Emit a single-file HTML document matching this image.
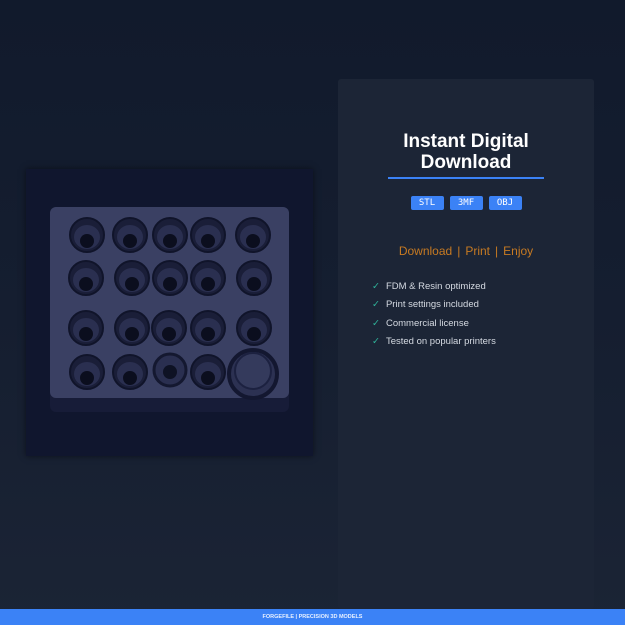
<!DOCTYPE html>
<html><head><style>
*{margin:0;padding:0;box-sizing:border-box}
body{width:625px;height:625px;overflow:hidden;background:linear-gradient(#111a2c 0%,#151e30 50%,#1b2435 100%);font-family:"Liberation Sans",sans-serif;position:relative}
.panel{position:absolute;left:338px;top:79px;width:256px;height:530px;background:#1c2536;border-radius:3px}
.img{position:absolute;left:26px;top:169px;width:287px;height:287px;background:#10162e;box-shadow:0 0 6px rgba(0,0,0,.5)}
h1{position:absolute;left:338px;width:256px;top:131px;text-align:center;color:#fff;font-size:19px;line-height:21px;font-weight:bold}
.rule{position:absolute;left:388px;top:177px;width:156px;height:2px;background:#3b82f6}
.tags{position:absolute;left:338px;width:256px;top:196px;text-align:center;font-size:0}
.tags span{display:inline-block;background:#3b82f6;color:#fff;font-family:"DejaVu Sans Mono",monospace;font-size:9px;line-height:14px;width:33px;margin:0 3px;border-radius:2px}
.dl{position:absolute;left:338px;width:256px;top:244px;text-align:center;color:#c77a22;font-size:12px}
.dl i{font-style:normal;color:#c77a22;margin:0 5px}
ul{position:absolute;left:372px;top:281px;list-style:none;color:#d5dae2;font-size:9.5px}
li{height:18.3px}
li b{color:#2fb39a;font-weight:normal;margin-right:6px}
.foot{position:absolute;left:0;top:609px;width:625px;height:16px;background:#3b82f6;color:#e8f0ff;font-size:5.5px;font-weight:bold;text-align:center;line-height:16px}
</style></head><body>
<div class="panel"></div>
<div class="img">
<svg width="287" height="287" viewBox="26 169 287 287">
<defs>
<g id="h"><circle r="17" fill="#1a1e38" stroke="#10142a" stroke-width="2"/><ellipse cx="0" cy="2" rx="13" ry="12" fill="#2a2f50"/><circle cx="0" cy="6" r="7" fill="#0b0e1e"/></g>
</defs>
<rect x="50" y="210" width="239" height="202" rx="6" fill="#171c38"/>
<rect x="50" y="207" width="239" height="191" rx="6" fill="#3a4063"/>
<use href="#h" x="87" y="235"/><use href="#h" x="130" y="235"/><use href="#h" x="170" y="235"/><use href="#h" x="208" y="235"/><use href="#h" x="253" y="235"/>
<use href="#h" x="86" y="278"/><use href="#h" x="132" y="278"/><use href="#h" x="170" y="278"/><use href="#h" x="208" y="278"/><use href="#h" x="254" y="278"/>
<use href="#h" x="86" y="328"/><use href="#h" x="132" y="328"/><use href="#h" x="169" y="328"/><use href="#h" x="208" y="328"/><use href="#h" x="254" y="328"/>
<use href="#h" x="87" y="372"/><use href="#h" x="130" y="372"/><use href="#h" x="208" y="372"/>
<circle cx="170" cy="370" r="16" fill="#2a2f50" stroke="#141830" stroke-width="3"/>
<circle cx="170" cy="372" r="7" fill="#0e1224"/>
<circle cx="253" cy="374" r="24" fill="#2c3152" stroke="#131730" stroke-width="4"/>
<circle cx="253" cy="371" r="18" fill="#343a5c" stroke="#1c2140" stroke-width="2"/>
</svg>
</div>
<h1>Instant Digital<br>Download</h1>
<div class="rule"></div>
<div class="tags"><span>STL</span><span>3MF</span><span>OBJ</span></div>
<div class="dl">Download<i>|</i>Print<i>|</i>Enjoy</div>
<ul><li><b>✓</b>FDM &amp; Resin optimized</li><li><b>✓</b>Print settings included</li><li><b>✓</b>Commercial license</li><li><b>✓</b>Tested on popular printers</li></ul>
<div class="foot">FORGEFILE | PRECISION 3D MODELS</div>
</body></html>
